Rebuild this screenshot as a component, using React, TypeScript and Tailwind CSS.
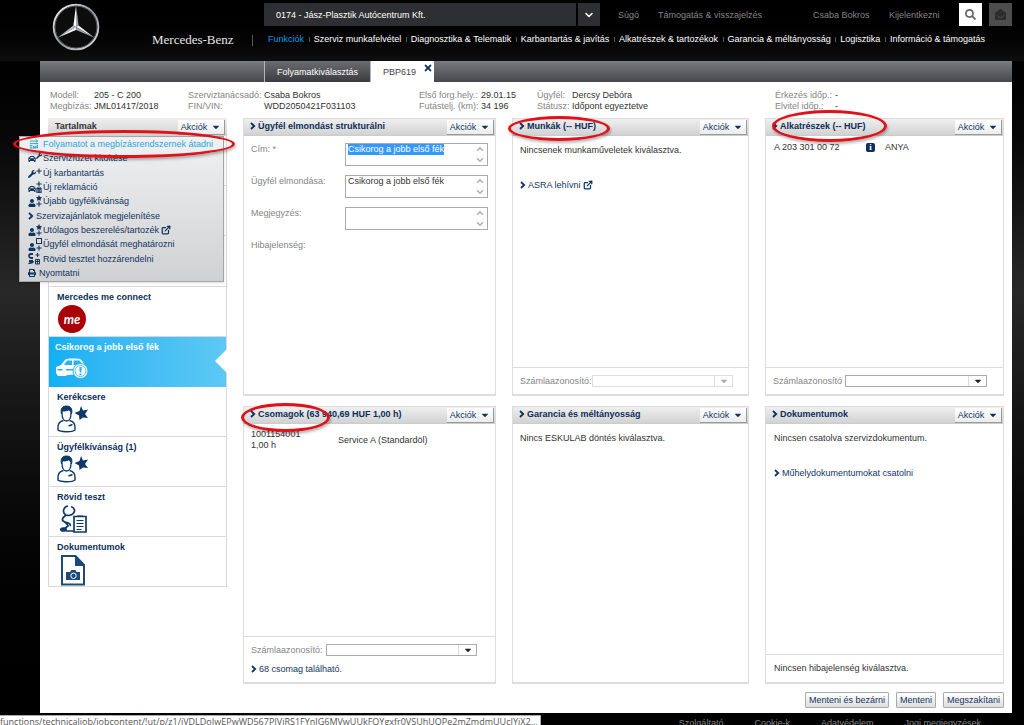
import { useEffect, useRef, type ReactNode } from "react";
import { ChevronDown, ChevronUp, ExternalLink } from "lucide-react";
import {
  FaCalendarAlt,
  FaCar,
  FaCaretDown,
  FaEnvelopeOpen,
  FaPlus,
  FaPrint,
  FaSearch,
  FaStar,
  FaTimes,
  FaUser,
  FaWrench,
} from "react-icons/fa";

const navItems = [
  "Szerviz munkafelvétel",
  "Diagnosztika & Telematik",
  "Karbantartás & javítás",
  "Alkatrészek & tartozékok",
  "Garancia & méltányosság",
  "Logisztika",
  "Információ & támogatás",
];

function StarLogo() {
  return (
    <svg viewBox="0 0 48 48" className="size-12 shrink-0" aria-label="Mercedes-Benz">
      <defs>
        <linearGradient id="ring" x1="0" y1="0" x2="1" y2="1">
          <stop offset="0" stopColor="#ffffff" />
          <stop offset="0.5" stopColor="#8d9196" />
          <stop offset="1" stopColor="#e4e6e8" />
        </linearGradient>
      </defs>
      <circle cx="24" cy="24" r="22.3" fill="#0c0c0d" stroke="url(#ring)" strokeWidth="2" />
      <circle cx="24" cy="24" r="20.9" fill="none" stroke="#55585c" strokeWidth="0.8" />
      <path d="M24 2.5 L26.6 22.4 L24 24 Z" fill="#a4a8ac" />
      <path d="M24 2.5 L21.4 22.4 L24 24 Z" fill="#f6f7f8" />
      <path d="M5.6 34.8 L21.4 22.4 L24 24 Z" fill="#b9bcc0" />
      <path d="M5.6 34.8 L24 27 L24 24 Z" fill="#f1f2f3" />
      <path d="M42.4 34.8 L26.6 22.4 L24 24 Z" fill="#f4f5f6" />
      <path d="M42.4 34.8 L24 27 L24 24 Z" fill="#989ca1" />
    </svg>
  );
}

function Header() {
  return (
    <header className="flex h-[61px] shrink-0 pt-[3px] pr-3 pl-[52px]">
      <StarLogo />
      <div className="ml-[52px] flex w-28 shrink-0 items-center pt-4">
        <span className="w-[100px] font-['Liberation_Serif',serif] text-[13px] leading-4 whitespace-nowrap text-[#e6e6e6]">
          Mercedes-Benz
        </span>
        <span className="h-[11px] w-px bg-[#555]" />
      </div>
      <div className="min-w-0 flex-1">
        <div className="flex h-[23px] items-center text-[#858585]">
          <select
            aria-label="Szerviz"
            className="h-[23px] w-[312px] appearance-none bg-[#2e2f32] pl-3 text-white"
          >
            <option>0174 - Jász-Plasztik Autócentrum Kft.</option>
          </select>
          <button aria-label="Lista megnyitása" className="ml-0.5 grid h-[23px] w-[22px] place-items-center bg-[#2e2f32] text-white">
            <ChevronDown className="size-3" strokeWidth={3} />
          </button>
          <a href="#" className="ml-[18px] w-10">Súgó</a>
          <a href="#">Támogatás &amp; visszajelzés</a>
          <div className="ml-auto flex items-center">
            <a href="#" className="w-[76px]">Csaba Bokros</a>
            <a href="#" className="w-[70px]">Kijelentkezni</a>
            <button aria-label="Keresés" className="grid h-[23px] w-[23px] place-items-center bg-white text-[#666]">
              <FaSearch className="size-[11px]" />
            </button>
            <button aria-label="Üzenetek" className="ml-[7px] grid h-[23px] w-[23px] place-items-center bg-[#4d4d4d] text-[#2c2c2c]">
              <FaEnvelopeOpen className="size-[11px]" />
            </button>
          </div>
        </div>
        <nav className="mt-[7px] flex items-center justify-between pr-[27px] pl-1 leading-3 whitespace-nowrap text-white">
          <a href="#" className="text-[#0099e5]">Funkciók</a>
          {navItems.map((item) => (
            <a key={item} href="#" className="flex items-center">
              <span className="mr-1 h-[5px] w-px bg-[#555]" />
              {item}
            </a>
          ))}
        </nav>
      </div>
    </header>
  );
}

function TabBar() {
  return (
    <div className="flex h-[21px] bg-linear-to-b from-[#7b7c80] to-[#46474a] pl-56">
      <button className="w-[107px] border-x border-[#b4b5b8] bg-linear-to-b from-[#6c6d71] to-[#3b3c3f] text-white">
        Folyamatkiválasztás
      </button>
      <div className="flex w-[63px] bg-white pl-3 text-[#444]">
        <button className="w-10 text-left">PBP619</button>
        <button aria-label="Bezárás" className="h-3.5 text-[#0a2d5c]">
          <FaTimes className="size-2.5" />
        </button>
      </div>
    </div>
  );
}

function Info({ rows, label }: { rows: string[][]; label: string }) {
  return (
    <dl>
      {rows.map(([name, value]) => (
        <div key={name} className="flex whitespace-nowrap">
          <dt className={label + " shrink-0 text-[#858585]"}>{name}</dt>
          <dd className="text-[#333]">{value}</dd>
        </div>
      ))}
    </dl>
  );
}

function OrderInfo() {
  return (
    <div className="grid grid-cols-[138fr_231fr_118fr_238fr_237fr] pt-2 pl-2.5 leading-[11px]">
      <Info label="w-11" rows={[["Modell:", "205 - C 200"], ["Megbízás:", "JML01417/2018"]]} />
      <Info label="w-[76px]" rows={[["Szerviztanácsadó:", "Csaba Bokros"], ["FIN/VIN:", "WDD2050421F031103"]]} />
      <Info label="w-[62px]" rows={[["Első forg.hely.:", "29.01.15"], ["Futástelj. (km):", "34 196"]]} />
      <Info label="w-[35px]" rows={[["Ügyfél:", "Dercsy Debóra"], ["Státusz:", "Időpont egyeztetve"]]} />
      <Info label="w-[60px]" rows={[["Érkezés időp.:", "-"], ["Elvitel időp.:", "-"]]} />
    </div>
  );
}

function Arrow() {
  return (
    <svg viewBox="0 0 6 8" className="h-2 w-1.5 shrink-0" fill="none" stroke="currentColor" strokeWidth="1.8">
      <path d="M1 1l3.2 3L1 7" />
    </svg>
  );
}

function Actions() {
  return (
    <button className="flex h-[15px] w-[47px] shrink-0 items-center justify-center gap-1 border-r border-b border-[#9a9a9a] bg-linear-to-b from-white to-[#ececec] text-[#12355f]">
      Akciók
      <FaCaretDown className="size-2.5" />
    </button>
  );
}

// hand-drawn marker around a heading
function Marker({ className }: { className: string }) {
  return (
    <span
      className={
        "pointer-events-none absolute z-20 rounded-[50%] border-[3px] border-[#df1219] shadow-[1px_2px_3px_rgba(0,0,0,0.3)] " + className
      }
    />
  );
}

function Panel({ title, marker, footer, children }: { title: string; marker?: string; footer?: ReactNode; children?: ReactNode }) {
  return (
    <section className="relative flex min-h-[278px] flex-col border border-b-2 border-[#dcdcdc] bg-white">
      <div className="flex h-[17px] items-center justify-between border-b border-[#ccc] bg-linear-to-b from-[#efefef] to-[#d2d2d2] pr-px pl-1.5">
        <h2 className="flex items-center gap-0.5 pb-0.5 font-bold text-[#0d2f5b]">
          <Arrow />
          {title}
        </h2>
        <Actions />
      </div>
      <div className="flex-1 px-[7px] text-[#333]">{children}</div>
      {footer && <div className="border-t border-[#dcdcdc] px-[7px] py-[7px] text-[#333]">{footer}</div>}
      {marker && <Marker className={marker} />}
    </section>
  );
}

function Field({ id, label, value = "", selected = false }: { id: string; label: string; value?: string; selected?: boolean }) {
  const ref = useRef<HTMLTextAreaElement>(null);
  useEffect(() => {
    if (selected && ref.current) {
      ref.current.focus();
      ref.current.select();
    }
  }, [selected]);
  return (
    <div className="flex">
      <label htmlFor={id} className="w-[94px] shrink-0 text-[#858585]">{label}</label>
      <div className="flex h-[23px] flex-1 border border-[#aaa]">
        <textarea
          id={id}
          ref={ref}
          defaultValue={value}
          className="min-w-0 flex-1 resize-none overflow-hidden pl-0.5 leading-[11px] outline-none selection:bg-[#3399ff] selection:text-white"
        />
        <div className="flex w-3.5 flex-col items-center justify-between text-[#b0b0b0]">
          <ChevronUp className="h-2.5 w-3" strokeWidth={4} />
          <ChevronDown className="h-2.5 w-3" strokeWidth={4} />
        </div>
      </div>
    </div>
  );
}

function AccountSelect({ id, kind = "normal" }: { id: string; kind?: "normal" | "disabled" | "wide" }) {
  const box = {
    normal: "flex h-3 w-[142px] border border-[#aaa] text-[#222]",
    disabled: "flex h-3 w-[141px] border border-[#ddd] text-[#aaa]",
    wide: "ml-[3px] flex h-3 w-[151px] border border-[#aaa] text-[#222]",
  };
  return (
    <div className="flex h-3 items-center">
      <label htmlFor={id} className="w-[72px] shrink-0 text-[#858585]">Számlaazonosító{kind !== "normal" && ":"}</label>
      <div className={box[kind]}>
        <select id={id} disabled={kind === "disabled"} className="min-w-0 flex-1 appearance-none" />
        <span className="grid w-[18px] place-items-center border-l border-[#ddd]">
          <FaCaretDown className="size-2.5" />
        </span>
      </div>
    </div>
  );
}

function Link({ children }: { children: ReactNode }) {
  return (
    <a href="#" className="flex items-center gap-0.5 text-[#12355f]">
      <Arrow />
      {children}
    </a>
  );
}

function TransferIcon() {
  return (
    <svg viewBox="0 0 12 12" className="ml-px h-3 w-2.5" fill="none" stroke="currentColor">
      <path d="M1 2.500h9M8 .500l2.500 2L8 4.500M1 5.500h10" strokeWidth="1.200" />
      <path d="M1 8h3M1 10.500h3M5.500 8v2.500H8V8M10 7v4" strokeWidth="1.500" />
    </svg>
  );
}

function Combo({ main, top, bottom }: { main: ReactNode; top?: ReactNode; bottom?: ReactNode }) {
  return (
    <span className="flex items-end">
      <span className="text-[8px]">{main}</span>
      <span className="flex w-[6px] flex-col text-[6px]">
        {top}
        {bottom}
      </span>
    </span>
  );
}

function ScopeIcon() {
  return (
    <svg viewBox="0 0 12 12" className="size-3" fill="none" stroke="currentColor">
      <path d="M5 1H3C0 1 1 5 3 5h2M1 8h4M1 11c0-2 4 0 4-3" strokeWidth="1.800" />
      <path d="M7.500 6.500h4v4.500h-4zM7.500 8.500h4M9.500 6.500V11M9.500 0v4M7.500 2h4" strokeWidth="1" />
    </svg>
  );
}

const menu = [
  { label: "Folyamatot a megbízásrendszernek átadni", icon: <TransferIcon />, active: true },
  { label: "Szervizfüzet kitöltése", icon: <Combo main={<FaCar />} top={<FaWrench />} bottom={<span className="h-1" />} /> },
  { label: "Új karbantartás", icon: <Combo main={<FaWrench />} top={<FaPlus />} bottom={<span className="h-1" />} /> },
  { label: "Új reklamáció", icon: <Combo main={<FaCar />} top={<FaPlus />} bottom={<FaCalendarAlt />} /> },
  { label: "Újabb ügyfélkívánság", icon: <Combo main={<FaUser />} top={<FaStar />} bottom={<FaPlus />} /> },
  { label: "Szervizajánlatok megjelenítése", icon: <Arrow />, narrow: "w-2" },
  { label: "Utólagos beszerelés/tartozék", icon: <Combo main={<FaUser />} top={<FaStar />} bottom={<FaPlus />} />, external: true },
  {
    label: "Ügyfél elmondását meghatározni",
    icon: <Combo main={<FaUser />} top={<span className="mb-px size-[6px] border border-current" />} bottom={<FaPlus />} />,
  },
  { label: "Rövid tesztet hozzárendelni", icon: <ScopeIcon /> },
  { label: "Nyomtatni", icon: <FaPrint className="size-2" />, narrow: "w-[11px]" },
];

function ActionMenu() {
  return (
    <ul className="absolute top-[18px] -left-[29px] z-10 flex h-[146px] w-[205px] flex-col justify-between border border-[#a5a5a5] bg-linear-to-b from-[#f0f1f2] to-[#cfd1d3] pb-px pl-2 text-[#12355f] shadow-sm">
      {menu.map((item) => (
        <li key={item.label}>
          <a href="#" className={item.active ? "flex h-[14px] items-center text-[#2da5dc]" : "flex h-[14px] items-center"}>
            <span className={(item.narrow ?? "w-[15px]") + " flex shrink-0 items-center"}>{item.icon}</span>
            <span className="whitespace-nowrap">{item.label}</span>
            {item.external && <ExternalLink className="ml-0.5 size-2.5" strokeWidth={3} />}
          </a>
        </li>
      ))}
    </ul>
  );
}

function CustomerIcon() {
  return (
    <svg viewBox="0 0 32 28" className="h-7 w-8" fill="none" stroke="#0d3a6b">
      <path d="M5 8c0 5 2 8 4.500 8s4.500-3 4.500-8" strokeWidth="1.300" />
      <path d="M4.500 9C3 3 6 1 9.500 1s6.500 2 5 8c-1-3-2-4-3-4-2 1-5 1-6 1z" fill="#0d3a6b" />
      <path d="M6.500 15.500c-4.500 1-5.500 3-5.500 6.500v3c2 2 14 2.500 17 0v-3c0-3.500-1-5.500-5.500-6.500M11.500 21l4-1.500" strokeWidth="1.400" />
      <path d="M24 1l2 4.500 5-1-3 4.500 3 4-5-.500-3.500 2.500-.500-4.500-4.500-2.500 5-2z" fill="#0d3a6b" stroke="none" />
    </svg>
  );
}

function CarAlertIcon() {
  return (
    <svg viewBox="0 0 34 22" className="h-[22px] w-[34px]" fill="#fff">
      <path d="M1 10l5-2 4-5c1-1 3-1.500 7-1.500s8 0 9.500 1.500l4 6 1 5-1 3h-4l-14 1-2 1H3l-2-3z" />
      <path d="M9 8l3-4.500h5V8zM18.500 3.500h6L28 8h-9.500z" fill="#27b2f0" />
      <path d="M2 12h5l1 1.500H3zM11 12h7v1.500h-7z" fill="#27b2f0" />
      <circle cx="25.500" cy="14" r="7.500" fill="#fff" stroke="#27b2f0" strokeWidth="1" />
      <circle cx="25.500" cy="14" r="5.500" fill="none" stroke="#27b2f0" strokeWidth="0.800" />
      <path d="M24.300 10h2.400l-.400 5.500h-1.600zM24.500 16.500h2v1.800h-2z" fill="#27b2f0" />
    </svg>
  );
}

function StethoscopeIcon() {
  return (
    <svg viewBox="0 0 32 28" className="h-7 w-8" fill="none" stroke="#0d3a6b">
      <path d="M11 1C6 2 5 8 9 10c4 1.500 9-1 8.500-5C17 3 16 2 14 1.500M9 10c-4 3-5 6-1 7s6 2 5 4M5 15c4 3 6 4 6 6l-4 3" strokeWidth="1.700" />
      <ellipse cx="6.500" cy="24.500" rx="3.500" ry="2.300" fill="#0d3a6b" stroke="none" />
      <path d="M17 11.500h12V27H17z" fill="#fff" strokeWidth="1.700" />
      <path d="M20 11h6M19.500 15.500h7M19.500 18.500h7M19.500 21.500h7M19.500 24.500h5" strokeWidth="1.200" />
      <path d="M9 26h8" strokeWidth="1.500" />
    </svg>
  );
}

function PhotoDocIcon() {
  return (
    <svg viewBox="0 0 32 31" className="h-[31px] w-8" fill="none" stroke="#1d4a77">
      <path d="M5 1h13.500l8.500 9v19.500H5z" strokeWidth="2" />
      <path d="M18 1v10h9.500z" fill="#1d4a77" stroke="none" />
      <path d="M9 17h4l1.500-2h4l1 2H23v8H9z" fill="#1d4a77" stroke="none" />
      <circle cx="16.500" cy="20.800" r="2.700" stroke="#fff" strokeWidth="1" />
    </svg>
  );
}

const contents = [
  {
    label: "Mercedes me connect",
    icon: (
      <span className="ml-px grid size-7 place-items-center rounded-full bg-[#a80207] font-['Lato',sans-serif] text-[13px] leading-3 font-bold text-white italic">
        me
      </span>
    ),
  },
  { label: "Csikorog a jobb első fék", icon: <CarAlertIcon />, active: true },
  { label: "Kerékcsere", icon: <CustomerIcon /> },
  { label: "Ügyfélkívánság (1)", icon: <CustomerIcon /> },
  { label: "Rövid teszt", icon: <StethoscopeIcon /> },
  { label: "Dokumentumok", icon: <PhotoDocIcon /> },
];

function Sidebar() {
  return (
    <aside className="relative row-span-2 self-start">
      <div className="flex h-[18px] items-center justify-between bg-linear-to-b from-[#efefef] to-[#d2d2d2] pr-0.5 pl-[7px]">
        <h2 className="pb-0.5 font-bold text-[#333]">Tartalmak</h2>
        <Actions />
      </div>
      <ActionMenu />
      <Marker className="top-3 -left-[35px] h-[28px] w-[222px]" />
      <ul className="border-x border-[#d8d8d8]">
        <li className="h-[50px] border-b border-[#d8d8d8]" />
        <li className="h-[50px] border-b border-[#d8d8d8]" />
        <li className="h-[51px] border-b border-[#d8d8d8]" />
        {contents.map((item) =>
          item.active ? (
            <li key={item.label} className="relative h-[50px] bg-linear-to-r from-[#10aff2] to-[#5cc9f4] pt-1 pl-1.5 font-bold text-white">
              <a href="#" className="block leading-3">{item.label}</a>
              <div className="mt-1">{item.icon}</div>
              <svg viewBox="0 0 12 24" className="absolute top-3 -right-px h-6 w-3">
                <path d="M12 0v24L0 12z" fill="#fff" />
              </svg>
            </li>
          ) : (
            <li key={item.label} className="h-[50px] border-b border-[#d8d8d8] pt-1 pl-2">
              <a href="#" className="block leading-3 font-bold text-[#0d2f5b]">{item.label}</a>
              <div className="mt-0.5">{item.icon}</div>
            </li>
          ),
        )}
      </ul>
    </aside>
  );
}

function FormButton({ children }: { children: ReactNode }) {
  return (
    <button className="h-4 rounded-[1px] border border-[#aaa] bg-linear-to-b from-white to-[#dedede] px-[3px] text-[#12355f]">
      {children}
    </button>
  );
}

export default function App() {
  return (
    <div className="relative flex h-screen flex-col overflow-hidden bg-linear-to-b from-black via-[#282828] via-40% to-black font-['Liberation_Sans',Arial,sans-serif] text-[9px] leading-3">
      <div className="bg-linear-to-b from-black to-[#0f0f0f]">
        <Header />
      </div>

      <main className="mr-3 ml-10 shrink-0 bg-white pb-[5px]">
        <TabBar />
        <OrderInfo />

        <div className="mt-1.5 grid grid-cols-[179fr_253fr_237fr_239fr] gap-x-4 gap-y-2.5 pr-2 pl-2">
          <Sidebar />

          <Panel title="Ügyfél elmondást strukturálni">
            <div className="flex flex-col gap-[9px] pt-[7px]">
              <Field id="title" label="Cím: *" value="Csikorog a jobb első fék" selected />
              <Field id="story" label="Ügyfél elmondása:" value="Csikorog a jobb első fék" />
              <Field id="note" label="Megjegyzés:" />
              <p className="text-[#858585]">Hibajelenség:</p>
            </div>
          </Panel>

          <Panel
            title="Munkák (-- HUF)"
            marker="-top-[3px] -left-[5px] h-[25px] w-[102px]"
            footer={<AccountSelect id="account-work" kind="disabled" />}
          >
            <p className="pt-2">Nincsenek munkaműveletek kiválasztva.</p>
            <div className="pt-[23px]">
              <Link>
                ASRA lehívni
                <ExternalLink className="size-2.5" strokeWidth={3} />
              </Link>
            </div>
          </Panel>

          <Panel
            title="Alkatrészek (-- HUF)"
            marker="-top-[9px] left-1.5 h-8 w-[115px]"
            footer={<AccountSelect id="account-parts" />}
          >
            <div className="flex items-center px-px pt-[5px]">
              <span className="w-[92px]">A 203 301 00 72</span>
              <span className="grid size-[9px] place-items-center rounded-[2px] bg-[#0d2f5b] font-['Liberation_Serif',serif] leading-none font-bold text-white">i</span>
              <span className="ml-2.5">ANYA</span>
            </div>
          </Panel>

          <Panel
            title="Csomagok (63 940,69 HUF 1,00 h)"
            marker="-top-1 -left-[3px] h-[29px] w-[89px]"
            footer={
              <div className="flex flex-col gap-[7px]">
                <AccountSelect id="account-packages" kind="wide" />
                <Link>68 csomag található.</Link>
              </div>
            }
          >
            <div className="flex items-center pt-[5px] leading-[11px]">
              <p className="w-[87px]">
                1001154001
                <br />
                1,00 h
              </p>
              <p>Service A (Standardöl)</p>
            </div>
          </Panel>

          <Panel title="Garancia és méltányosság">
            <p className="pt-2">Nincs ESKULAB döntés kiválasztva.</p>
          </Panel>

          <Panel title="Dokumentumok" footer={<p className="px-px pb-px">Nincsen hibajelenség kiválasztva.</p>}>
            <p className="px-px pt-2">Nincsen csatolva szervizdokumentum.</p>
            <div className="px-px pt-[23px]">
              <Link>Műhelydokumentumokat csatolni</Link>
            </div>
          </Panel>
        </div>

        <div className="mt-2 flex justify-end gap-[7px] pr-2">
          <FormButton>Menteni és bezárni</FormButton>
          <FormButton>Menteni</FormButton>
          <FormButton>Megszakítani</FormButton>
        </div>
      </main>

      <footer className="flex shrink-0 justify-end gap-[31px] pt-1 pr-[43px] text-[#858585]">
        <a href="#">Szolgáltató</a>
        <a href="#">Cookie-k</a>
        <a href="#">Adatvédelem</a>
        <a href="#">Jogi megjegyzések</a>
      </footer>

      <div className="absolute bottom-0 left-0 h-[10px] overflow-hidden border-t border-r border-[#aaa] bg-white pr-0.5 font-['Open_Sans',sans-serif] text-[9px] leading-3 whitespace-nowrap text-[#555]">
        functions/technicaljob/jobcontent/!ut/p/z1/jVDLDoIwEPwWD567PIVjRS1FYnJG6MVwUUkFQYgxfr0VSUhUQPe2mZmdmUUcIYjX2...
      </div>
    </div>
  );
}
